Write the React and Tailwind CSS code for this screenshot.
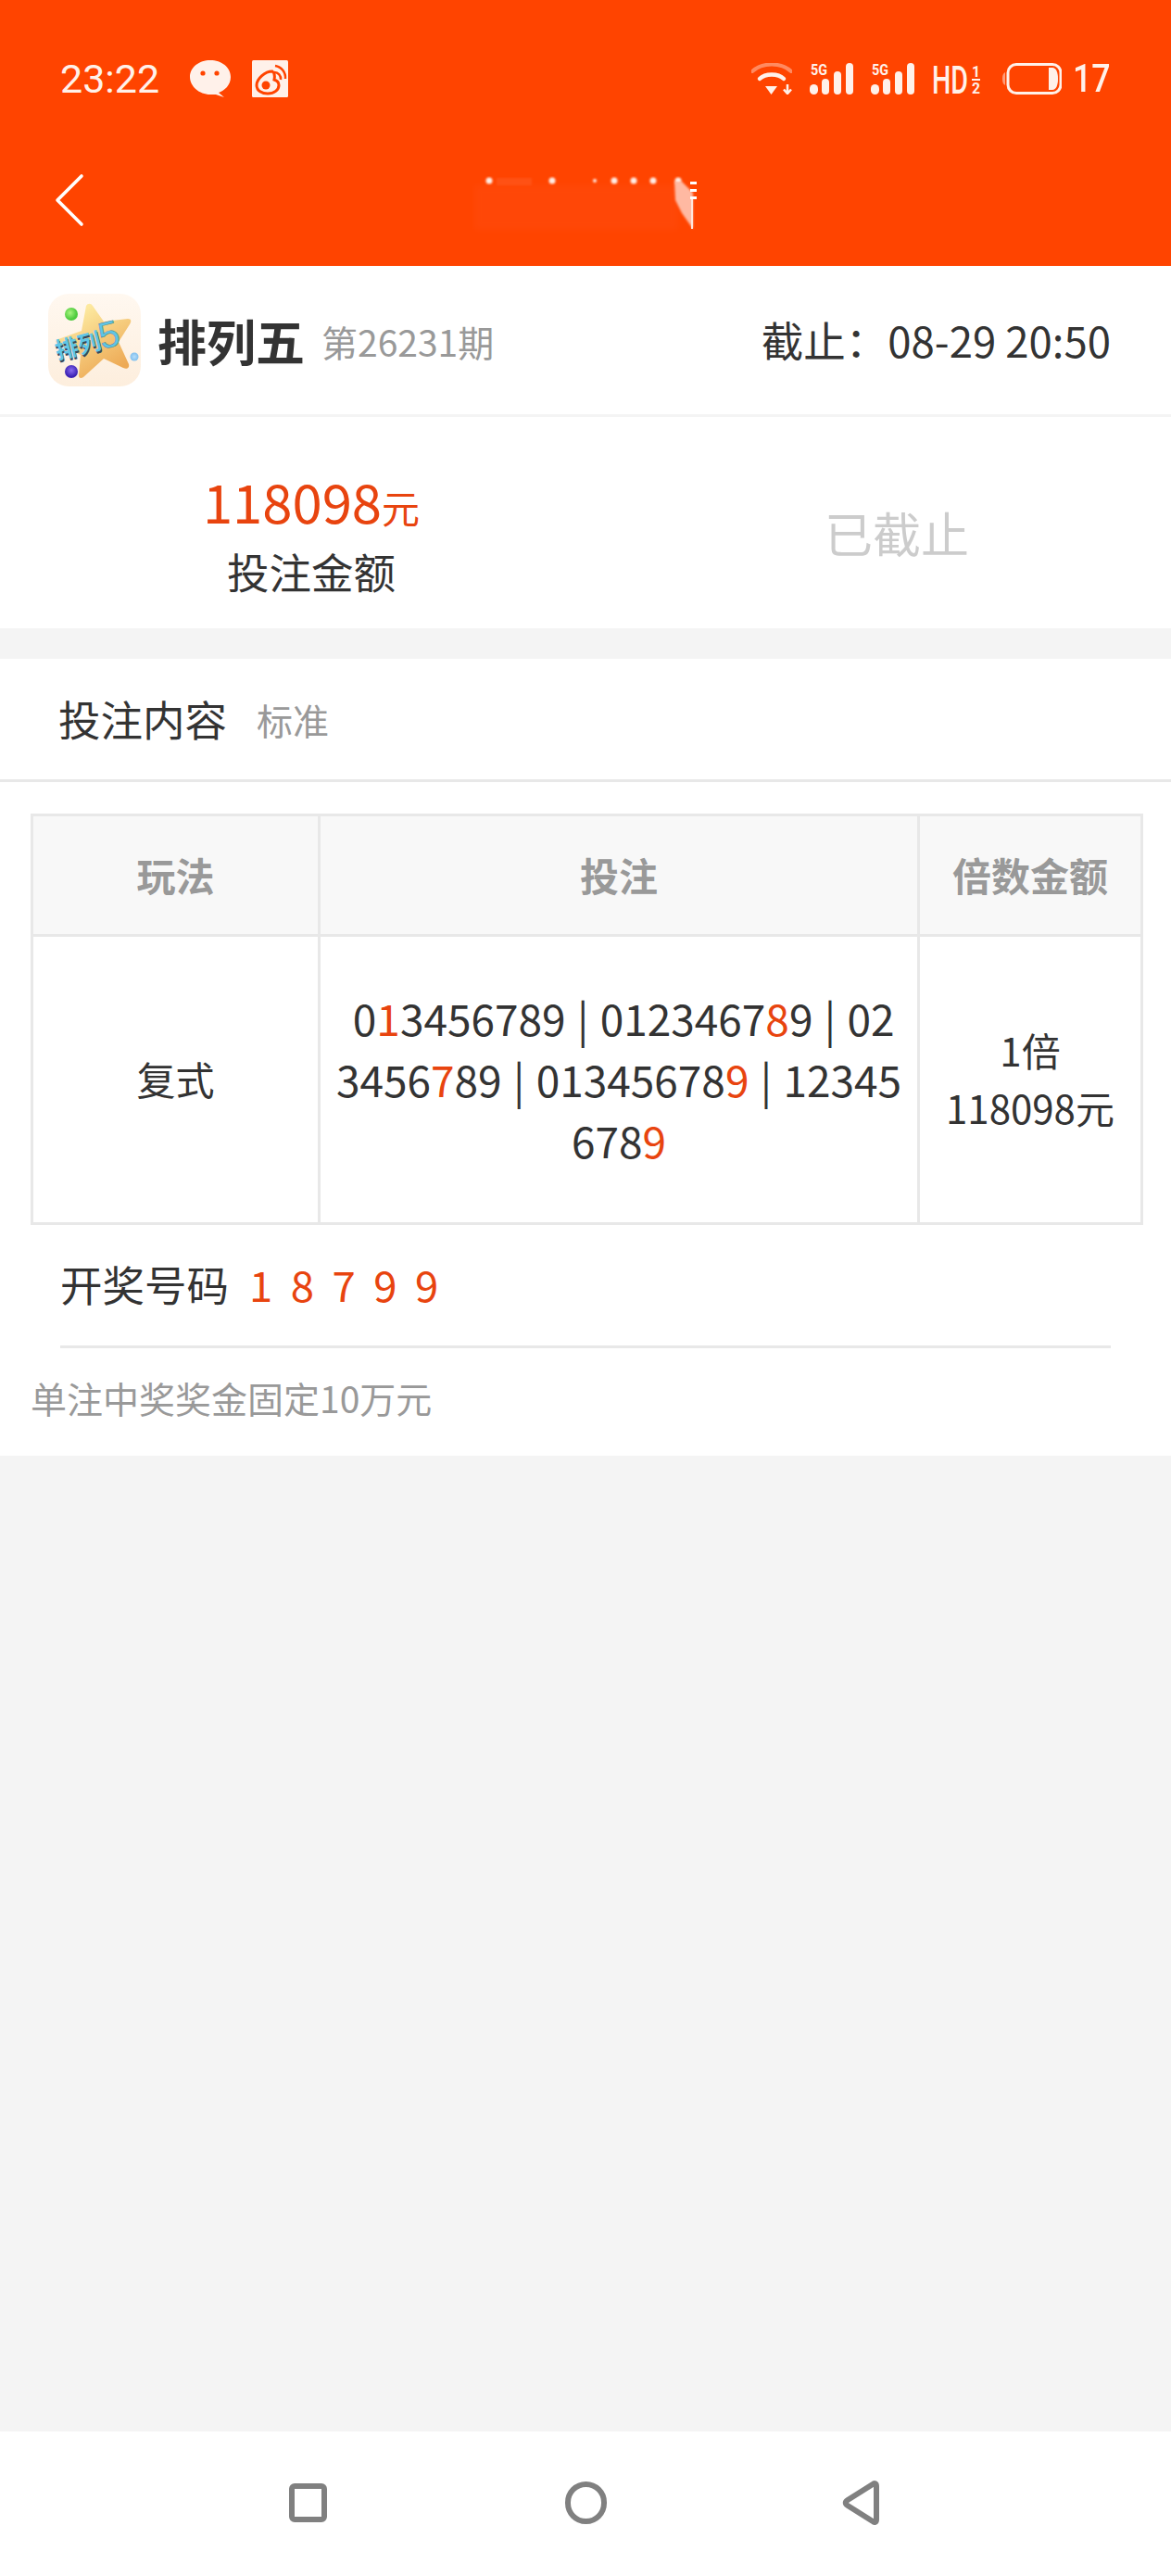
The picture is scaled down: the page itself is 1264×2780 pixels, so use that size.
const RED = "text-[#e8440f]";

const Pipe = () => <span className="mx-[2px]"> | </span>;

const Signal = () => (
  <svg className="overflow-visible" width="47" height="34" viewBox="0 0 47 34" fill="#fff1ea">
    <text x="1" y="13" fontSize="17" fontWeight="700" fontFamily="Roboto" textLength="18" lengthAdjust="spacingAndGlyphs">5G</text>
    <rect x="0" y="23" width="9" height="11" rx="4.5" />
    <rect x="13" y="17" width="8" height="17" rx="4" />
    <rect x="26" y="9" width="8" height="25" rx="4" />
    <rect x="39" y="0" width="8" height="34" rx="4" />
  </svg>
);

const Wifi = () => (
  <svg width="44" height="34" viewBox="0 0 44 34" fill="none">
    <path d="M1 9 C 12 -1, 32 -1, 43 9" stroke="#ff8a60" strokeWidth="4" strokeLinecap="round" />
    <path d="M9 17 C 15 11, 29 11, 35 17" stroke="#fff1ea" strokeWidth="4.5" strokeLinecap="round" />
    <path d="M15 25 L28 25 L21.5 34 Z" fill="#fff1ea" />
    <path d="M39 23 V32 M35 28.5 L39 33 L43 28.5" stroke="#fff1ea" strokeWidth="2.5" />
  </svg>
);

const StatusBar = () => (
  <div className="flex h-[50px] items-center justify-between pl-[65px] pr-[66px] font-['Roboto'] text-[#fff1ea]">
    <div className="flex items-center">
      <span className="w-[140px] text-[43px] leading-none">23:22</span>
      {/* wechat */}
      <svg width="44" height="40" viewBox="0 0 44 40">
        <path d="M22 0 C34 0 44 7.5 44 18 C44 27 37 33 31 35 L37 40 L28 37 C26 37 24 37 22 37 C10 37 0 28 0 18 C0 7.500 10 0 22 0 Z" fill="#fff1ea" />
        <circle cx="14" cy="14" r="2.600" fill="#ff4400" />
        <circle cx="29" cy="14" r="2.600" fill="#ff4400" />
      </svg>
      {/* weibo */}
      <svg className="ml-[23px]" width="39" height="40" viewBox="0 0 39 40">
        <rect width="39" height="40" rx="1.500" fill="#fff1ea" />
        <path d="M22 12 C14 12 5 20 5 27 C5 33 11 36 17 36 C24 36 29 32 29 27 C29 24 27 22 24 21 C25 17 24 13 22 12 Z" fill="none" stroke="#ff4400" strokeWidth="3" />
        <circle cx="15" cy="27" r="4.500" fill="#ff4400" />
        <path d="M24 13 A 7 7 0 0 1 31 21" fill="none" stroke="#ff4400" strokeWidth="2.500" />
        <path d="M25 6 A 13 13 0 0 1 36 20" fill="none" stroke="#ff4400" strokeWidth="2.500" />
      </svg>
    </div>
    <div className="flex items-center">
      <Wifi />
      <div className="ml-[19px]"><Signal /></div>
      <div className="ml-[19px]"><Signal /></div>
      <svg className="ml-[19px] overflow-visible" width="52" height="34" viewBox="0 0 52 34" fill="#fff1ea">
        <text x="0" y="33" fontSize="43" fontWeight="500" fontFamily="Roboto" textLength="39" lengthAdjust="spacingAndGlyphs">HD</text>
        <text x="43" y="15" fontSize="17" fontWeight="700" fontFamily="Roboto" textLength="9" lengthAdjust="spacingAndGlyphs">1</text>
        <rect x="43" y="17" width="9" height="2" />
        <text x="43" y="33" fontSize="16" fontWeight="700" fontFamily="Roboto" textLength="9" lengthAdjust="spacingAndGlyphs">2</text>
      </svg>
      <svg className="ml-[24px]" width="64" height="34" viewBox="0 0 64 34" fill="none">
        <rect x="6" y="1.500" width="57" height="31" rx="9" stroke="#fff1ea" strokeWidth="3" />
        <path d="M0 17 C0 13 1 11 3 10 V24 C1 23 0 21 0 17 Z" fill="#ff9c78" />
        <path d="M50 5 H54 C58 5 60 10 60 17 C60 24 58 29 54 29 H50 Z" fill="#fff1ea" />
      </svg>
      <span className="ml-[12px] w-[40px] origin-left scale-x-[0.85] text-[42px] font-medium leading-none">17</span>
    </div>
  </div>
);

const BlurredTitle = () => (
  <svg className="absolute left-[510px] top-[186px]" width="250" height="70" viewBox="0 0 250 70">
    <defs>
      <filter id="smear"><feGaussianBlur stdDeviation="3" /></filter>
      <filter id="soft"><feGaussianBlur stdDeviation="1.200" /></filter>
    </defs>
    <rect x="2" y="14" width="220" height="48" fill="#ff5420" opacity="0.22" filter="url(#smear)" />
    <rect x="26" y="6" width="38" height="8" fill="#ff6a3a" opacity="0.35" filter="url(#soft)" />
    <g fill="#ffeee6" filter="url(#soft)">
      <circle cx="18" cy="9" r="3.500" />
      <circle cx="86" cy="9" r="3.500" />
      <circle cx="132" cy="9" r="2" />
      <circle cx="153" cy="9" r="3.500" />
      <circle cx="174" cy="9" r="3.500" />
      <circle cx="195" cy="9" r="3.500" />
      <circle cx="222" cy="9" r="3.500" />
    </g>
    <path d="M218 10 L226 10 L238 22 L238 61 L226 44 L219 30 Z" fill="#ffb9a2" filter="url(#soft)" />
    <rect x="235" y="10" width="7" height="3" fill="#fff" />
    <rect x="235" y="18" width="7" height="3" fill="#fff" />
    <rect x="235" y="26" width="7" height="3" fill="#fff" />
    <rect x="236" y="29" width="2" height="32" fill="#ffe6dc" />
  </svg>
);

const Header = () => (
  <div className="relative h-[287px] bg-[#ff4400] pt-[60px]">
    <StatusBar />
    <svg className="absolute left-[58px] top-[187px]" width="34" height="58" viewBox="0 0 34 58" fill="none">
      <path d="M30 3 L4 29 L30 55" stroke="#fff" strokeWidth="3.600" strokeLinecap="round" strokeLinejoin="round" />
    </svg>
    <BlurredTitle />
  </div>
);

const Logo = () => (
  <svg width="100" height="100" viewBox="0 0 100 100">
    <defs>
      <linearGradient id="tile" x1="0" y1="0" x2="0" y2="1">
        <stop offset="0" stopColor="#fff8f0" />
        <stop offset="1" stopColor="#fdeedd" />
      </linearGradient>
      <linearGradient id="star" x1="0.300" y1="0.100" x2="0.800" y2="0.900">
        <stop offset="0" stopColor="#fdeaa0" />
        <stop offset="1" stopColor="#eda955" />
      </linearGradient>
      <radialGradient id="green" cx="0.400" cy="0.400"><stop offset="0" stopColor="#a8f57e" /><stop offset="1" stopColor="#4fcb3e" /></radialGradient>
      <radialGradient id="purple" cx="0.500" cy="0.400"><stop offset="0" stopColor="#8a6cf0" /><stop offset="1" stopColor="#3b22b4" /></radialGradient>
      <radialGradient id="sky"><stop offset="0" stopColor="#b8defa" /><stop offset="1" stopColor="#7fbfee" /></radialGradient>
    </defs>
    <rect width="100" height="100" rx="22" fill="url(#tile)" />
    <path d="M41 13 C43 10 46 10 48 13 L60 30 L86 27 C90 27 90 30 88 33 L76 52 L87 76 C88 80 85 82 81 80 L60 70 L38 90 C35 92 33 91 33 88 L35 66 L10 54 C7 52 8 50 11 49 L36 40 Z" fill="url(#star)" />
    <circle cx="25" cy="22" r="7" fill="url(#green)" />
    <circle cx="25" cy="84" r="7" fill="url(#purple)" />
    <circle cx="93" cy="68" r="4.500" fill="url(#sky)" />
    <text x="11" y="73" transform="rotate(-14 11 73)" fontSize="25" fontWeight="700" fontFamily="'Noto Sans CJK SC'" fill="#37465a" textLength="50" lengthAdjust="spacingAndGlyphs">排列</text>
    <text x="10" y="71" transform="rotate(-14 10 71)" fontSize="25" fontWeight="700" fontFamily="'Noto Sans CJK SC'" fill="#5fc6e6" textLength="50" lengthAdjust="spacingAndGlyphs">排列</text>
    <text x="58" y="60" transform="rotate(-14 58 60)" fontSize="40" fontWeight="500" fontFamily="'Liberation Sans'" fill="#5fc6e6" stroke="#3f7f98" strokeWidth="0.500">5</text>
  </svg>
);

const App = () => {
  return (
    <div className="flex h-[2780px] flex-col bg-[#f4f4f4] font-['Noto_Sans_CJK_SC',sans-serif] text-[#333]">
      <Header />

      <div className="flex h-[163px] items-center justify-between border-b-[3px] border-[#f4f4f4] bg-white pl-[52px] pr-[65px]">
        <div className="flex items-center">
          <Logo />
          <span className="ml-[18px] text-[53px] font-bold leading-none">排列五</span>
          <span className="ml-[18px] pt-[2px] text-[39px] leading-none text-[#999]">第26231期</span>
        </div>
        <span className="text-[45.5px] leading-none">截止：08-29 20:50</span>
      </div>

      <div className="flex h-[228px] bg-white">
        <div className="flex w-[672px] flex-col items-center pt-[59px]">
          <div className={`flex items-baseline leading-none ${RED}`}>
            <span className="text-[58px] leading-[62px]">118098</span>
            <span className="text-[41px] leading-[62px]">元</span>
          </div>
          <span className="mt-[8px] text-[45.5px] leading-[60px]">投注金额</span>
        </div>
        <div className="flex flex-1 items-center justify-center pt-[22px]">
          <span className="text-[52px] leading-none text-[#ccc]">已截止</span>
        </div>
      </div>

      <div className="mt-[33px] h-[860px] bg-white">
        <div className="flex h-[133px] items-center border-b-[3px] border-[#e8e8e8] pl-[63px]">
          <span className="text-[45.5px] leading-none">投注内容</span>
          <span className="ml-[32px] text-[39px] leading-none text-[#999]">标准</span>
        </div>

        <div className="px-[33px] pt-[34px]">
          <table className="w-[1198px] table-fixed border-collapse text-center">
            <colgroup>
              <col className="w-[310px]" />
              <col className="w-[647px]" />
              <col className="w-[241px]" />
            </colgroup>
            <thead>
              <tr className="h-[130px] bg-[#f8f8f8] text-[42px] font-bold text-[#999]">
                <th className="border-[3px] border-[#e8e8e8] pb-[2px] font-bold">玩法</th>
                <th className="border-[3px] border-[#e8e8e8] pb-[2px] font-bold">投注</th>
                <th className="border-[3px] border-[#e8e8e8] pb-[2px] font-bold">倍数金额</th>
              </tr>
            </thead>
            <tbody>
              <tr className="h-[311px] text-[42px]">
                <td className="border-[3px] border-[#e8e8e8] pb-[3px]">复式</td>
                <td className="break-all border-[3px] border-[#e8e8e8] px-[15px] pb-[3px] text-[46px] leading-[66px]">
                  &nbsp;0<span className={RED}>1</span>3456789<Pipe />0123467<span className={RED}>8</span>9<Pipe />023456<span className={RED}>7</span>89<Pipe />01345678<span className={RED}>9</span><Pipe />12345678<span className={RED}>9</span>
                </td>
                <td className="border-[3px] border-[#e8e8e8] pb-[3px] leading-[62px]">
                  1倍<br />118098元
                </td>
              </tr>
            </tbody>
          </table>
        </div>

        <div className="mx-[65px] flex h-[133px] items-center border-b-[3px] border-[#e8e8e8] pb-[2px] text-[45.5px]">
          <span className="leading-none">开奖号码</span>
          <div className={`ml-[22px] flex gap-[19.500px] leading-none ${RED}`}>
            {[1, 8, 7, 9, 9].map((n, i) => (
              <span key={i}>{n}</span>
            ))}
          </div>
        </div>
        <div className="pl-[33px] pt-[31px] text-[39px] leading-[44px] text-[#999]">单注中奖奖金固定10万元</div>
      </div>

      <div className="mt-auto flex h-[156px] items-center bg-white">
        <div className="flex h-full w-full items-center pb-[3px] pl-[312px]">
          <div className="h-[42px] w-[41px] rounded-[6px] border-[6px] border-[#808080]" />
          <div className="ml-[257px] h-[46px] w-[45px] rounded-full border-[6px] border-[#808080]" />
          <svg className="ml-[254px]" width="40" height="50" viewBox="0 0 40 50" fill="none">
            <path d="M33 5 C35 3 37 4 37 7 V43 C37 46 35 47 33 45 L6 28 C3 26 3 24 6 22 Z" stroke="#808080" strokeWidth="6" strokeLinejoin="round" />
          </svg>
        </div>
      </div>
    </div>
  );
};

export default App;
